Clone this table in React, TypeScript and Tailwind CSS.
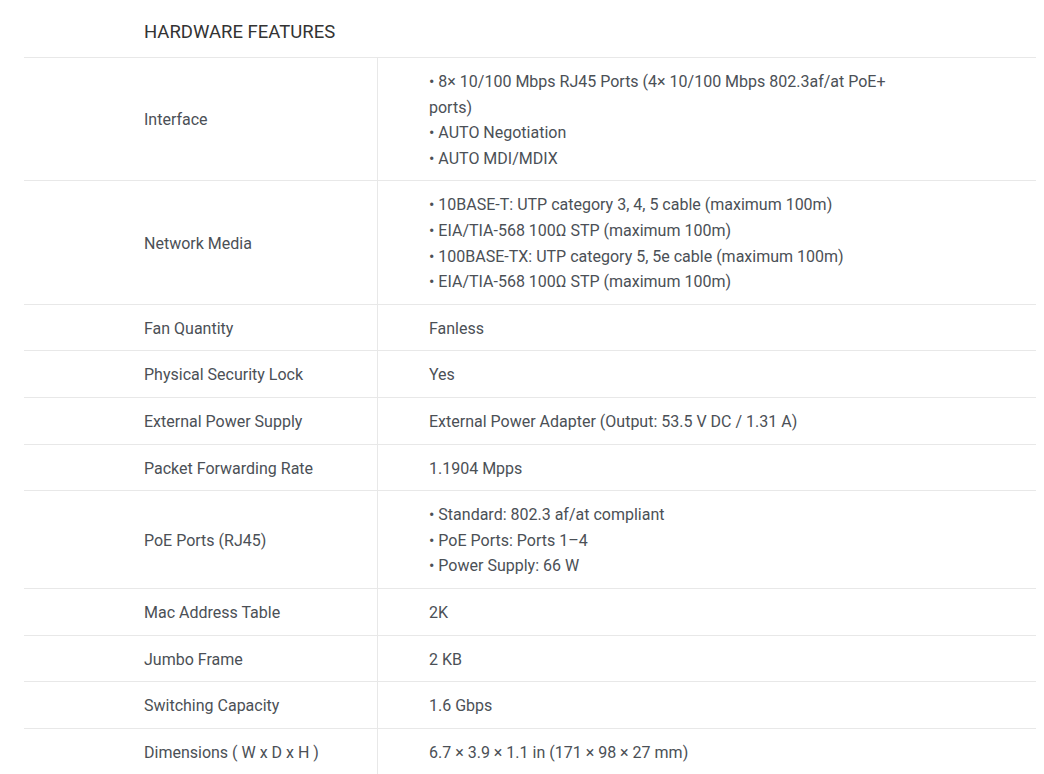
import React from "react";

type Spec = { label: string; lines: string[] };

const specs: Spec[] = [
  {
    label: "Interface",
    lines: [
      "• 8× 10/100 Mbps RJ45 Ports (4× 10/100 Mbps 802.3af/at PoE+ ports)",
      "• AUTO Negotiation",
      "• AUTO MDI/MDIX",
    ],
  },
  {
    label: "Network Media",
    lines: [
      "• 10BASE-T: UTP category 3, 4, 5 cable (maximum 100m)",
      "• EIA/TIA-568 100Ω STP (maximum 100m)",
      "• 100BASE-TX: UTP category 5, 5e cable (maximum 100m)",
      "• EIA/TIA-568 100Ω STP (maximum 100m)",
    ],
  },
  { label: "Fan Quantity", lines: ["Fanless"] },
  { label: "Physical Security Lock", lines: ["Yes"] },
  { label: "External Power Supply", lines: ["External Power Adapter (Output: 53.5 V DC / 1.31 A)"] },
  { label: "Packet Forwarding Rate", lines: ["1.1904 Mpps"] },
  {
    label: "PoE Ports (RJ45)",
    lines: ["• Standard: 802.3 af/at compliant", "• PoE Ports: Ports 1–4", "• Power Supply: 66 W"],
  },
  { label: "Mac Address Table", lines: ["2K"] },
  { label: "Jumbo Frame", lines: ["2 KB"] },
  { label: "Switching Capacity", lines: ["1.6 Gbps"] },
  { label: "Dimensions ( W x D x H )", lines: ["6.7 × 3.9 × 1.1 in (171 × 98 × 27 mm)"] },
];

export default function App() {
  return (
    <main
      className="min-h-screen bg-white px-6 text-[#4b5056]"
      style={{ fontFamily: "Roboto, 'Liberation Sans', sans-serif" }}
    >
      <h2 className="h-[57px] pl-[120px] pt-[21px] text-[18.5px] leading-[22px] text-[#333]">HARDWARE FEATURES</h2>
      <div className="w-[1012px] border-t border-[#e8e8e8]">
        {specs.map((spec) => (
          <div key={spec.label} className="grid grid-cols-[354px_1fr] border-b border-[#e8e8e8] text-[16px] leading-[25.6px]">
            <div className="flex items-center border-r border-[#e8e8e8] pb-[9px] pt-[11px] pl-[120px]">{spec.label}</div>
            <div className="pb-[9px] pt-[11px] pl-[51px]">
              <div className="max-w-[475px]">
                {spec.lines.map((line) => (
                  <div key={line}>{line}</div>
                ))}
              </div>
            </div>
          </div>
        ))}
      </div>
    </main>
  );
}
